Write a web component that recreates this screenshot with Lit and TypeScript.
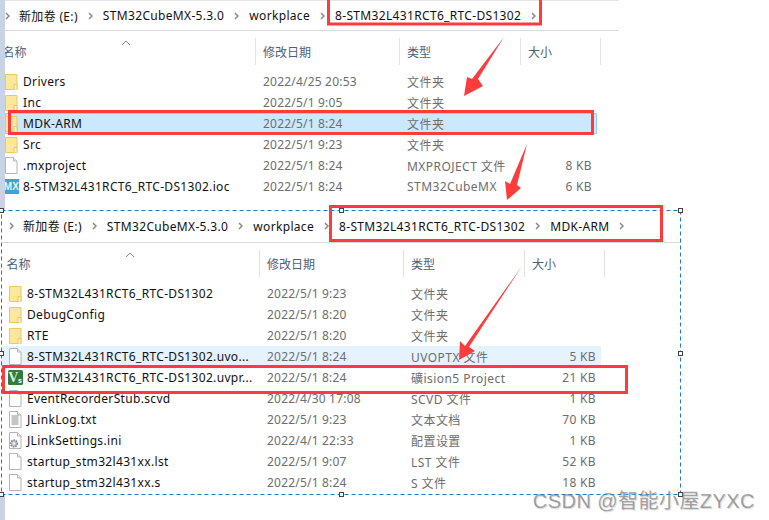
import { LitElement, html, css, svg } from "lit";
import { customElement, property } from "lit/decorators.js";

type Kind = "folder" | "file" | "mx" | "uv" | "txt" | "ini";
interface Row { name: string; date: string; type: string; size: string; kind: Kind; state?: string; }

const folderIcon = svg`<path d="M.5 1.5h11.5v15H.5z" fill="#fde79a" stroke="#e8c868"/><path d="M9 16.5v-5h3v5" fill="#fff3c0" stroke="#e8c868"/>`;
const fileIcon = svg`<path d="M.5 .5h8l3.5 3.5v12.5H.5z" fill="#fff" stroke="#b4b4b4"/><path d="M8.5 .5v3.5H12" fill="#eee" stroke="#b4b4b4"/>`;

function icon(kind: Kind) {
  let body;
  if (kind === "folder") body = folderIcon;
  else if (kind === "file") body = fileIcon;
  else if (kind === "txt") body = svg`${fileIcon}<path d="M2.5 5h7M2.5 7h7M2.5 9h7M2.5 11h7M2.5 13h7" stroke="#8a8a8a"/>`;
  else if (kind === "ini") body = svg`${fileIcon}<circle cx="5" cy="11.5" r="3.4" fill="#b9bfc4" stroke="#868c90" stroke-width="1.5" stroke-dasharray="1.5 1"/><circle cx="5" cy="11.5" r="1.2" fill="#fff"/>`;
  else if (kind === "mx") body = svg`<rect x="-1" y="1" width="15" height="15" fill="#38a5db"/><text x="6.5" y="12" text-anchor="middle" font-family="Liberation Sans, sans-serif" font-size="10" font-weight="700" fill="#e6f4fb">MX</text>`;
  else body = svg`<rect x="-1" y="1" width="15" height="15" rx="1.5" fill="#2f7d3c"/><text x="4.5" y="12.5" text-anchor="middle" font-family="Liberation Serif, serif" font-size="14" font-weight="700" fill="#dfeeda">V</text><text x="11" y="14" text-anchor="middle" font-family="Liberation Sans, sans-serif" font-size="7" font-weight="700" fill="#fff">s</text>`;
  return html`<svg class="icon" width="14" height="17" viewBox="0 0 14 17">${body}</svg>`;
}

const chev = html`<svg class="chev" width="5" height="8" viewBox="0 0 5 8"><path d="M1 1l3 3-3 3" fill="none" stroke="#8a8a8a" stroke-width="1.5"/></svg>`;

const P = "8-STM32L431RCT6_RTC-DS1302";

const topRows: Row[] = [
  { name: "Drivers", date: "2022/4/25 20:53", type: "文件夹", size: "", kind: "folder" },
  { name: "Inc", date: "2022/5/1 9:05", type: "文件夹", size: "", kind: "folder" },
  { name: "MDK-ARM", date: "2022/5/1 8:24", type: "文件夹", size: "", kind: "folder", state: "selected" },
  { name: "Src", date: "2022/5/1 9:23", type: "文件夹", size: "", kind: "folder" },
  { name: ".mxproject", date: "2022/5/1 8:24", type: "MXPROJECT 文件", size: "8 KB", kind: "file" },
  { name: P + ".ioc", date: "2022/5/1 8:24", type: "STM32CubeMX", size: "6 KB", kind: "mx" },
];
const bottomRows: Row[] = [
  { name: P, date: "2022/5/1 9:23", type: "文件夹", size: "", kind: "folder" },
  { name: "DebugConfig", date: "2022/5/1 8:20", type: "文件夹", size: "", kind: "folder" },
  { name: "RTE", date: "2022/5/1 8:20", type: "文件夹", size: "", kind: "folder" },
  { name: P + ".uvo...", date: "2022/5/1 8:24", type: "UVOPTX 文件", size: "5 KB", kind: "file", state: "hover" },
  { name: P + ".uvpr...", date: "2022/5/1 8:24", type: "礦ision5 Project", size: "21 KB", kind: "uv" },
  { name: "EventRecorderStub.scvd", date: "2022/4/30 17:08", type: "SCVD 文件", size: "1 KB", kind: "file" },
  { name: "JLinkLog.txt", date: "2022/5/1 9:23", type: "文本文档", size: "70 KB", kind: "txt" },
  { name: "JLinkSettings.ini", date: "2022/4/1 22:33", type: "配置设置", size: "1 KB", kind: "ini" },
  { name: "startup_stm32l431xx.lst", date: "2022/5/1 9:07", type: "LST 文件", size: "52 KB", kind: "file" },
  { name: "startup_stm32l431xx.s", date: "2022/5/1 8:24", type: "S 文件", size: "18 KB", kind: "file" },
];

@customElement("explorer-panel")
class ExplorerPanel extends LitElement {
  @property({ type: Array }) crumbs: string[] = [];
  @property({ type: Array }) rows: Row[] = [];
  static styles = css`
    :host { display: block; --pad: 0px; --head: -2.4px; --caret: 116px; --w: 592px; letter-spacing: .33px; }
    :host([variant="lower"]) { --pad: 7px; --head: 4.6px; --caret: 123px; --w: 599px; }
    .crumbs { display: flex; align-items: center; gap: 10px; height: 30px; padding-left: var(--pad); border-bottom: 1px solid #d9d9d9; color: #111; white-space: nowrap; box-sizing: content-box; }
    :host([variant="lower"]) .crumbs { height: 32px; }
    :host(:not([variant="lower"])) .crumbs { border-top: 1px solid #e6e6e6; height: 29px; width: 614px; }
    .chev { flex: none; }
    .chev:first-child { margin-left: 0; margin-right: -1px; }
    .head, .row { display: grid; width: var(--w); }
    .head { position: relative; grid-template-columns: 1fr 144px 121px 80px; width: calc(var(--w) + 4px); height: 27px; margin: 7px 0 6px; color: #4c607a; letter-spacing: 0; }
    .head > div { display: flex; align-items: center; overflow: hidden; padding-left: 7px; border-right: 1px solid #e2e2e2; box-sizing: border-box; }
    .head > div:first-child { padding-left: 0; }
    .head > div:first-child span { margin-left: var(--head); }
    .caret { position: absolute; left: var(--caret); top: 2px; }
    .row { grid-template-columns: 1fr 144px 121px 76px; height: 21px; box-sizing: border-box; align-items: center; color: #6d6d6d; }
    .row.selected { background: #cce8ff; outline: 1px solid #99d1ff; outline-offset: -1px; }
    .row.hover { background: #e5f3ff; }
    .name { display: flex; align-items: center; gap: 4px; padding-left: var(--pad); color: #111; overflow: hidden; white-space: nowrap; }
    .icon { flex: none; overflow: visible; }
    .date, .type { padding-left: 7px; white-space: nowrap; }
    .date { letter-spacing: .2px; }
    .type { letter-spacing: .45px; }
    .size { text-align: right; padding-right: 5px; }
  `;
  render() {
    return html`
      <div class="crumbs">${chev}${this.crumbs.map((c) => html`<span>${c}</span>${chev}`)}</div>
      <div class="head">
        <div><span>名称</span></div><div>修改日期</div><div>类型</div><div>大小</div>
        <svg class="caret" width="10" height="6" viewBox="0 0 10 6"><path d="M1 5l4-4 4 4" fill="none" stroke="#8a8a8a"/></svg>
      </div>
      ${this.rows.map((r) => html`
        <div class="row ${r.state ?? ""}">
          <div class="name">${icon(r.kind)}<span>${r.name}</span></div>
          <div class="date">${r.date}</div>
          <div class="type">${r.type}</div>
          <div class="size">${r.size}</div>
        </div>`)}
    `;
  }
}

const handles: [number, number][] = [[1.5, 210.5], [341.5, 210.5], [680.5, 210.5], [1.5, 353.5], [680.5, 353.5], [1.5, 494.5], [341.5, 494.5], [680.5, 494.5]];

@customElement("app-root")
class AppRoot extends LitElement {
  static styles = css`
    :host { display: block; width: 769px; height: 520px; position: relative; overflow: hidden; background: #fff; font: 12px "Noto Sans", "Noto Sans CJK SC", sans-serif; }
    .upper-wrap { border-left: 5px solid #c9d3e6; height: 210px; }
    .upper { height: 210px; overflow: hidden; width: 614px; }
    .lower { height: 285px; margin-left: 2px; width: 680px; overflow: hidden; }
    .foot { height: 25px; width: 5px; background: #c9d3e6; }
    .marks { position: absolute; inset: 0; pointer-events: none; }
    .mark { position: absolute; right: 14px; top: 485px; font: 20px "Liberation Sans", "Noto Sans CJK SC", sans-serif; letter-spacing: .45px; color: rgba(110,110,110,.62); text-shadow: 1px 1px 1px rgba(190,190,190,.6); white-space: nowrap; }
  `;
  render() {
    return html`
      <div class="upper-wrap">
        <explorer-panel class="upper" .crumbs=${["新加卷 (E:)", "STM32CubeMX-5.3.0", "workplace", P]} .rows=${topRows}></explorer-panel>
      </div>
      <explorer-panel class="lower" variant="lower" .crumbs=${["新加卷 (E:)", "STM32CubeMX-5.3.0", "workplace", P, "MDK-ARM"]} .rows=${bottomRows}></explorer-panel>
      <div class="foot"></div>
      <svg class="marks" width="769" height="520" viewBox="0 0 769 520">
        <rect x="1.5" y="210.5" width="679" height="284" fill="none" stroke="#1f78c8" stroke-dasharray="4 3"/>
        ${handles.map(([x, y]) => svg`<rect x="${x - 2}" y="${y - 2}" width="4" height="4" fill="#fff" stroke="#444"/>`)}
        <g fill="none" stroke="#ff3b3b" stroke-width="3">
          <rect x="328.5" y="-2" width="212" height="26"/>
          <rect x="9.5" y="111.5" width="583" height="22"/>
          <rect x="330.5" y="206.5" width="331" height="34"/>
          <rect x="3.5" y="366.5" width="623" height="26"/>
        </g>
        <g fill="#ff3b3b">
          <polygon points="504,37 478,79 483,86 464,96 467,77 472,79"/>
          <polygon points="527,144 517,185 521,188 507,200 505,181 510,184"/>
          <polygon points="522,266 469,347 475,351 459,360 460,341 465,346"/>
        </g>
      </svg>
      <div class="mark">CSDN @智能小屋ZYXC</div>
    `;
  }
}
